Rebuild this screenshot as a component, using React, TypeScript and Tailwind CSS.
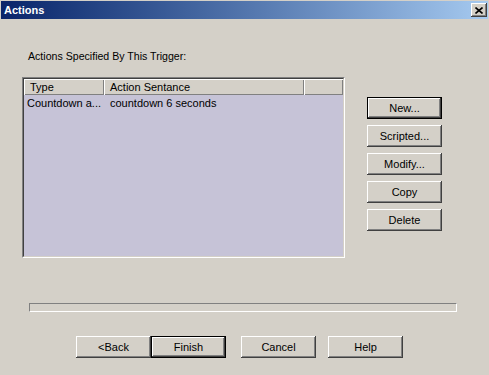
import React from 'react'

const btn =
  'w-[75px] h-[22px] flex items-center justify-center text-[11px] text-black bg-[#d4d0c8] shadow-[inset_-1px_-1px_#404040,inset_1px_1px_#ffffff,inset_-2px_-2px_#808080,inset_2px_2px_#d4d0c8]'
const defBtn =
  'w-[75px] h-[22px] flex items-center justify-center text-[11px] text-black bg-[#d4d0c8] border border-black shadow-[inset_-1px_-1px_#404040,inset_1px_1px_#ffffff,inset_-2px_-2px_#808080,inset_2px_2px_#d4d0c8]'

export default function App() {
  return (
    <div className="w-[489px] h-[375px] bg-[#d4d0c8] pt-[1px] px-[1px] flex flex-col font-['Liberation_Sans',Arial,sans-serif] text-black overflow-hidden">
      {/* title bar */}
      <div className="h-[18px] w-[487px] flex items-center justify-between pl-[3px] pr-[1px] bg-gradient-to-r from-[#0a246a] to-[#a6caf0]">
        <span className="text-white font-bold text-[11px] leading-[13px]">Actions</span>
        <div className="w-[16px] h-[14px] flex items-center justify-center bg-[#d4d0c8] shadow-[inset_-1px_-1px_#404040,inset_1px_1px_#ffffff,inset_-2px_-2px_#808080]">
          <svg width="8" height="7" viewBox="0 0 8 7">
            <path d="M0.5 0.5 L7.5 6.5 M7.5 0.5 L0.5 6.5" stroke="#000" strokeWidth="1.6" />
          </svg>
        </div>
      </div>

      {/* label */}
      <div className="mt-[31px] ml-[27px] text-[10.6px] leading-[13px]">Actions Specified By This Trigger:</div>

      {/* list + side buttons */}
      <div className="mt-[14px] ml-[21px] flex">
        <div className="w-[323px] h-[181px] border border-t-[#808080] border-l-[#808080] border-b-white border-r-white">
          <div className="w-full h-full flex flex-col border border-t-[#404040] border-l-[#404040] border-b-[#d4d0c8] border-r-[#d4d0c8] bg-[#c6c3d7]">
            <div className="h-[16px] flex bg-[#d4d0c8] text-[11px] leading-[13px]">
              <div className="w-[80px] flex items-center pl-[6px] shadow-[inset_1px_1px_#ffffff,inset_-1px_-1px_#808080]">Type</div>
              <div className="w-[200px] flex items-center pl-[6px] shadow-[inset_1px_1px_#ffffff,inset_-1px_-1px_#808080]">Action Sentance</div>
              <div className="flex-1 shadow-[inset_1px_1px_#ffffff,inset_-1px_-1px_#808080]"></div>
            </div>
            <div className="flex h-[14px] mt-[1px] items-center text-[11px] leading-[13px]">
              <div className="w-[80px] pl-[3px] whitespace-nowrap">Countdown a...</div>
              <div className="w-[200px] pl-[6px] whitespace-nowrap">countdown 6 seconds</div>
            </div>
          </div>
        </div>

        <div className="ml-[22px] mt-[20px] flex flex-col gap-[6px]">
          <div className={defBtn}>New...</div>
          <div className={btn}>Scripted...</div>
          <div className={btn}>Modify...</div>
          <div className={btn}>Copy</div>
          <div className={btn}>Delete</div>
        </div>
      </div>

      {/* progress bar */}
      <div className="mt-[45px] ml-[28px] w-[428px] h-[9px] border border-t-[#808080] border-l-[#808080] border-b-white border-r-white">
        <div className="w-full h-full border border-[#d4d0c8]"></div>
      </div>

      {/* bottom buttons */}
      <div className="mt-[24px] flex">
        <div className={btn + ' ml-[75px]'}>&lt;Back</div>
        <div className={defBtn}>Finish</div>
        <div className={btn + ' ml-[15px]'}>Cancel</div>
        <div className={btn + ' ml-[12px]'}>Help</div>
      </div>
    </div>
  )
}
